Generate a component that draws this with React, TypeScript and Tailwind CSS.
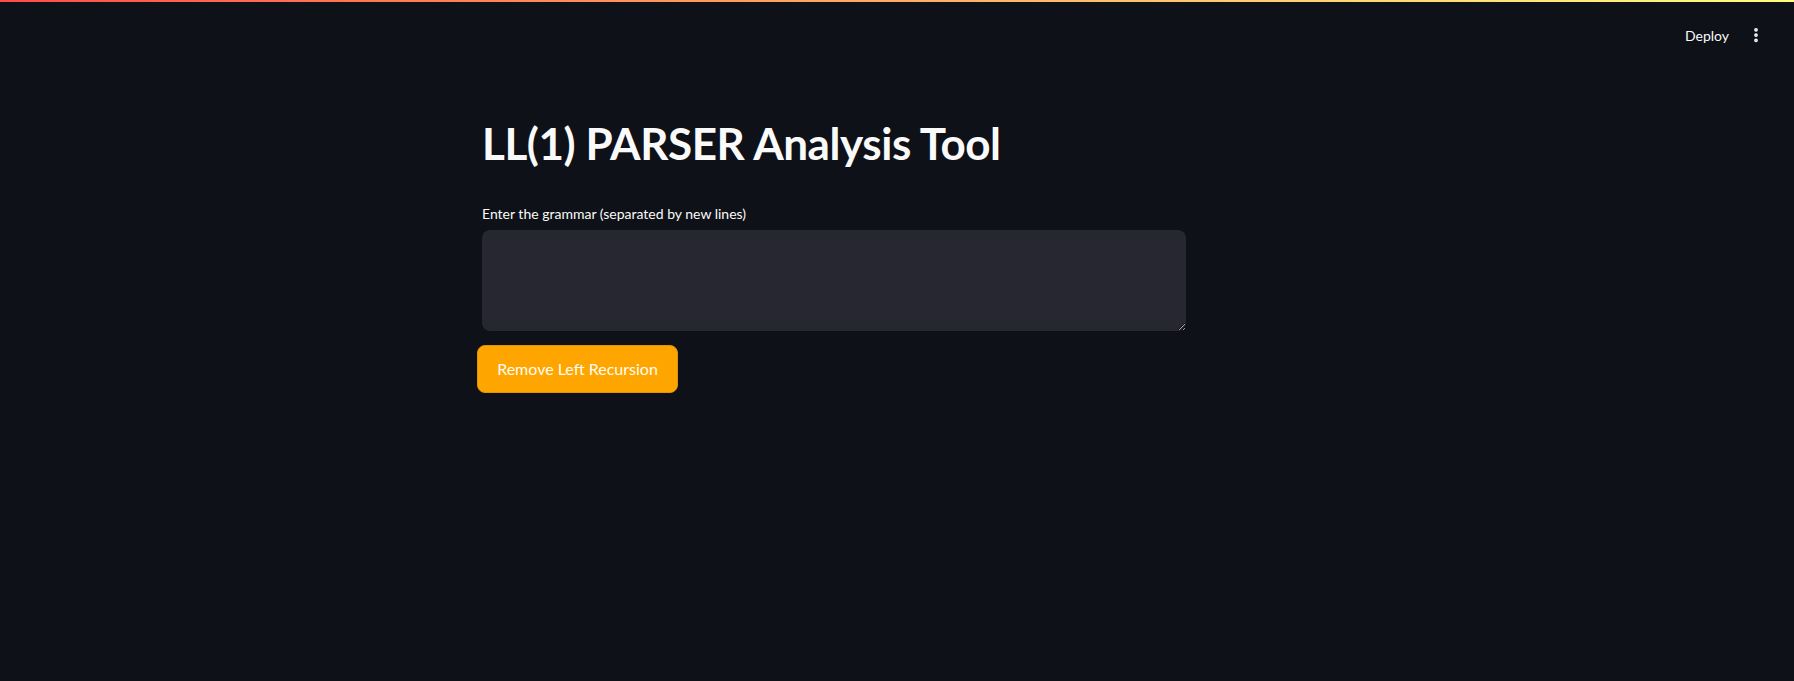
import { EllipsisVertical } from "lucide-react"

const font = { fontFamily: '"Lato", "Noto Sans", sans-serif' }

function Header() {
  return (
    <header className="relative h-[60px] w-full">
      <div className="absolute left-0 right-0 top-0 h-[2px] bg-gradient-to-r from-[#ff4b4b] to-[#fffd80]" />
      <div className="flex h-full items-center justify-end pr-[29px] pt-[10px]">
        <button className="mr-[18px] text-[14px] text-[#fafafa]">Deploy</button>
        <EllipsisVertical className="h-[18px] w-[18px] text-[#fafafa]" strokeWidth={3} />
      </div>
    </header>
  )
}

export default function App() {
  return (
    <div className="min-h-[681px] w-full bg-[#0e1117] text-[#fafafa]" style={font}>
      <Header />
      <main className="ml-[482px] w-[704px] pt-[57px]">
        <h1 className="text-[44px] font-bold leading-[1.2] tracking-[-0.01em]">LL(1) PARSER Analysis Tool</h1>

        <label className="mt-[34px] block text-[14px] leading-[20px]">
          Enter the grammar (separated by new lines)
        </label>
        <textarea className="mt-[6px] block h-[101px] w-full resize-y rounded-lg bg-[#262730] px-3 py-2 text-[14px] outline-none" />

        <button className="-ml-[5px] mt-[14px] flex h-[48px] w-[201px] items-center justify-center rounded-lg border border-[#e09400] bg-[#ffa500] text-[16px] text-[#fffdf5]">
          Remove Left Recursion
        </button>
      </main>
    </div>
  )
}
